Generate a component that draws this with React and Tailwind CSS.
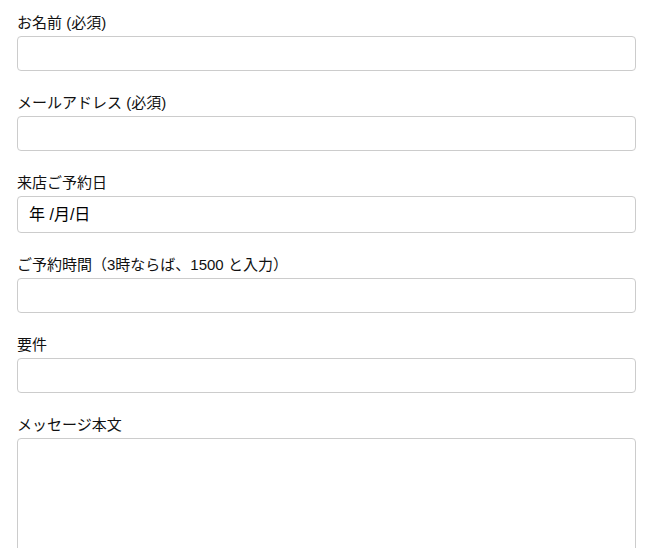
import React from 'react';

// Simple reservation / contact form
const fields = [
  { id: 'name', label: 'お名前 (必須)' },
  { id: 'email', label: 'メールアドレス (必須)' },
  { id: 'date', label: '来店ご予約日', date: true },
  { id: 'time', label: 'ご予約時間（3時ならば、1500 と入力）' },
  { id: 'subject', label: '要件' },
];

const App = () => {
  return (
    <div
      className="bg-white text-[15px] text-[#111] pl-[17px] pr-[28px] pt-[13px] h-[548px] overflow-hidden"
      style={{ fontFamily: '"Liberation Sans", "Noto Sans CJK JP", sans-serif' }}
    >
      {fields.map((f) => (
        <div key={f.id} className="flex flex-col">
          <label htmlFor={f.id} className="h-[20px] leading-[20px] mb-[3px]">{f.label}</label>
          {f.date ? (
            <div className="h-[37px] mb-[22px] border border-[#cccccc] rounded-[4px] flex items-center pl-[11px] text-[16px] text-black">
              年 /月/日
            </div>
          ) : (
            <input
              id={f.id}
              type="text"
              className="h-[35px] mb-[22px] border border-[#cccccc] rounded-[4px] px-2 outline-none"
            />
          )}
        </div>
      ))}
      <div className="flex flex-col">
        <label htmlFor="message" className="h-[20px] leading-[20px] mb-[3px]">メッセージ本文</label>
        <textarea id="message" className="h-[200px] border border-[#cccccc] rounded-[4px] resize-none outline-none" />
      </div>
    </div>
  );
};

export default App;
